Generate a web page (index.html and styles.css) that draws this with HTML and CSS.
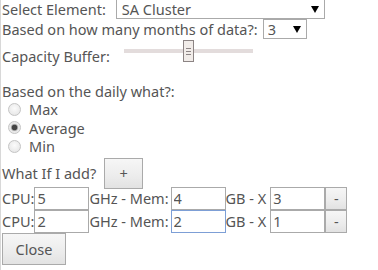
FILE: index.html
```html
<!DOCTYPE html>
<html lang="en">
<head>
    <meta charset="UTF-8">
    <title>What If</title>
    <link rel="stylesheet" href="styles.css">
</head>
<body>
    <div class="dialog">
        <div class="row">
            <span class="label">Select Element:</span>
            <span class="select-wrap element">
                <select><option>SA Cluster</option></select>
            </span>
        </div>
        <div class="row">
            <span class="label">Based on how many months of data?:</span>
            <span class="select-wrap months">
                <select><option>3</option><option>6</option><option>12</option></select>
            </span>
        </div>
        <div class="row buffer">
            <span class="label">Capacity Buffer:</span>
            <input type="range" class="slider" min="0" max="100" value="50">
        </div>

        <div class="daily">
            <div>Based on the daily what?:</div>
            <label class="radio"><input type="radio" name="daily"> Max</label>
            <label class="radio"><input type="radio" name="daily" checked> Average</label>
            <label class="radio"><input type="radio" name="daily"> Min</label>
        </div>

        <div class="row add">
            <span class="label">What If I add?</span>
            <button class="btn plus">+</button>
        </div>

        <div class="server">CPU:<input type="text" value="5">GHz - Mem:<input type="text" class="mem" value="4">GB - X<input type="text" class="count" value="3"><button class="btn minus">-</button></div>
        <div class="server">CPU:<input type="text" value="2">GHz - Mem:<input type="text" class="mem focused" value="2">GB - X<input type="text" class="count" value="1"><button class="btn minus">-</button></div>

        <button class="btn close">Close</button>
    </div>
</body>
</html>
```

FILE: styles.css
```css
body {
    margin: 0;
    background: #fff;
    font-family: "Noto Sans", "DejaVu Sans", sans-serif;
    font-size: 14.5px;
    color: #555;
}

.dialog {
    border-left: 1px solid #d8d8d8;
    padding: 0 0 0 1px;
    margin-top: -1px;
    height: 280px;
}

.row {
    display: flex;
    align-items: center;
    height: 20px;
}

.label {
    margin-right: 5px;
}

.select-wrap {
    position: relative;
    display: inline-block;
}

.select-wrap select {
    appearance: none;
    -webkit-appearance: none;
    font: inherit;
    color: #555;
    background: #fff;
    border: 1px solid #aaa;
    border-radius: 0;
    height: 20px;
    padding: 0 0 0 5px;
    line-height: 18px;
    outline: none;
}

.select-wrap::after {
    content: "";
    position: absolute;
    right: 6px;
    top: 7px;
    border-left: 4px solid transparent;
    border-right: 4px solid transparent;
    border-top: 7px solid #000;
}

.element {
    margin-left: 5px;
}

.element select {
    width: 209px;
}

.months select {
    width: 44px;
    padding-left: 4px;
}

.buffer {
    height: 26px;
    align-items: flex-start;
}

.buffer .label {
    margin-top: 7px;
    margin-right: 14px;
}

.slider {
    -webkit-appearance: none;
    appearance: none;
    width: 129px;
    height: 22px;
    margin: 1px 0 0;
    background: transparent;
}

.slider::-webkit-slider-runnable-track {
    height: 4px;
    background: #e3dcdc;
}

.slider::-webkit-slider-thumb {
    -webkit-appearance: none;
    width: 11px;
    height: 22px;
    margin-top: -9px;
    border: 1px solid #8c8484;
    box-sizing: border-box;
    background:
        linear-gradient(#8c8484, #8c8484) 2px 7px / 5px 1px no-repeat,
        linear-gradient(#8c8484, #8c8484) 2px 10px / 5px 1px no-repeat,
        linear-gradient(#8c8484, #8c8484) 2px 13px / 5px 1px no-repeat,
        #f1ece9;
}

.daily {
    margin-top: 17px;
    line-height: 18px;
}

.radio {
    display: flex;
    align-items: center;
    height: 18.5px;
}

.radio input {
    -webkit-appearance: none;
    appearance: none;
    width: 13px;
    height: 13px;
    margin: 0 8px 0 6px;
    border-radius: 50%;
    border: 1px solid #c4c4c4;
    background: radial-gradient(circle at 50% 40%, #fbfbfb, #e2e2e2);
    box-sizing: border-box;
}

.radio input:checked {
    background: radial-gradient(circle, #444 0 2.5px, #9a9a9a 3px, #e6e6e6 4px, #f4f4f4);
}

.add {
    height: 31px;
    margin-top: 2px;
    margin-bottom: -2px;
}

.btn {
    font: inherit;
    color: #555;
    border: 1px solid #aaa;
    border-radius: 0;
    background: linear-gradient(#f6f6f6, #ececec 60%, #e2e2e2);
    padding: 0;
}

.plus {
    width: 39px;
    height: 31px;
    margin-left: 3px;
}

.server {
    display: flex;
    align-items: center;
    height: 23px;
}

.server input {
    font: inherit;
    color: #555;
    width: 55px;
    height: 23px;
    box-sizing: border-box;
    border: 1px solid #aaa;
    padding: 0 2px;
    margin: 0;
    outline: none;
}

.server input.mem {
    margin-left: 2px;
}

.server input.count {
    margin-left: 4px;
}

.server input.focused {
    border-color: #7d9fd6;
}

.minus {
    width: 22px;
    height: 23px;
}

.close {
    display: block;
    width: 64px;
    height: 32px;
    margin-top: 0;
}
```
